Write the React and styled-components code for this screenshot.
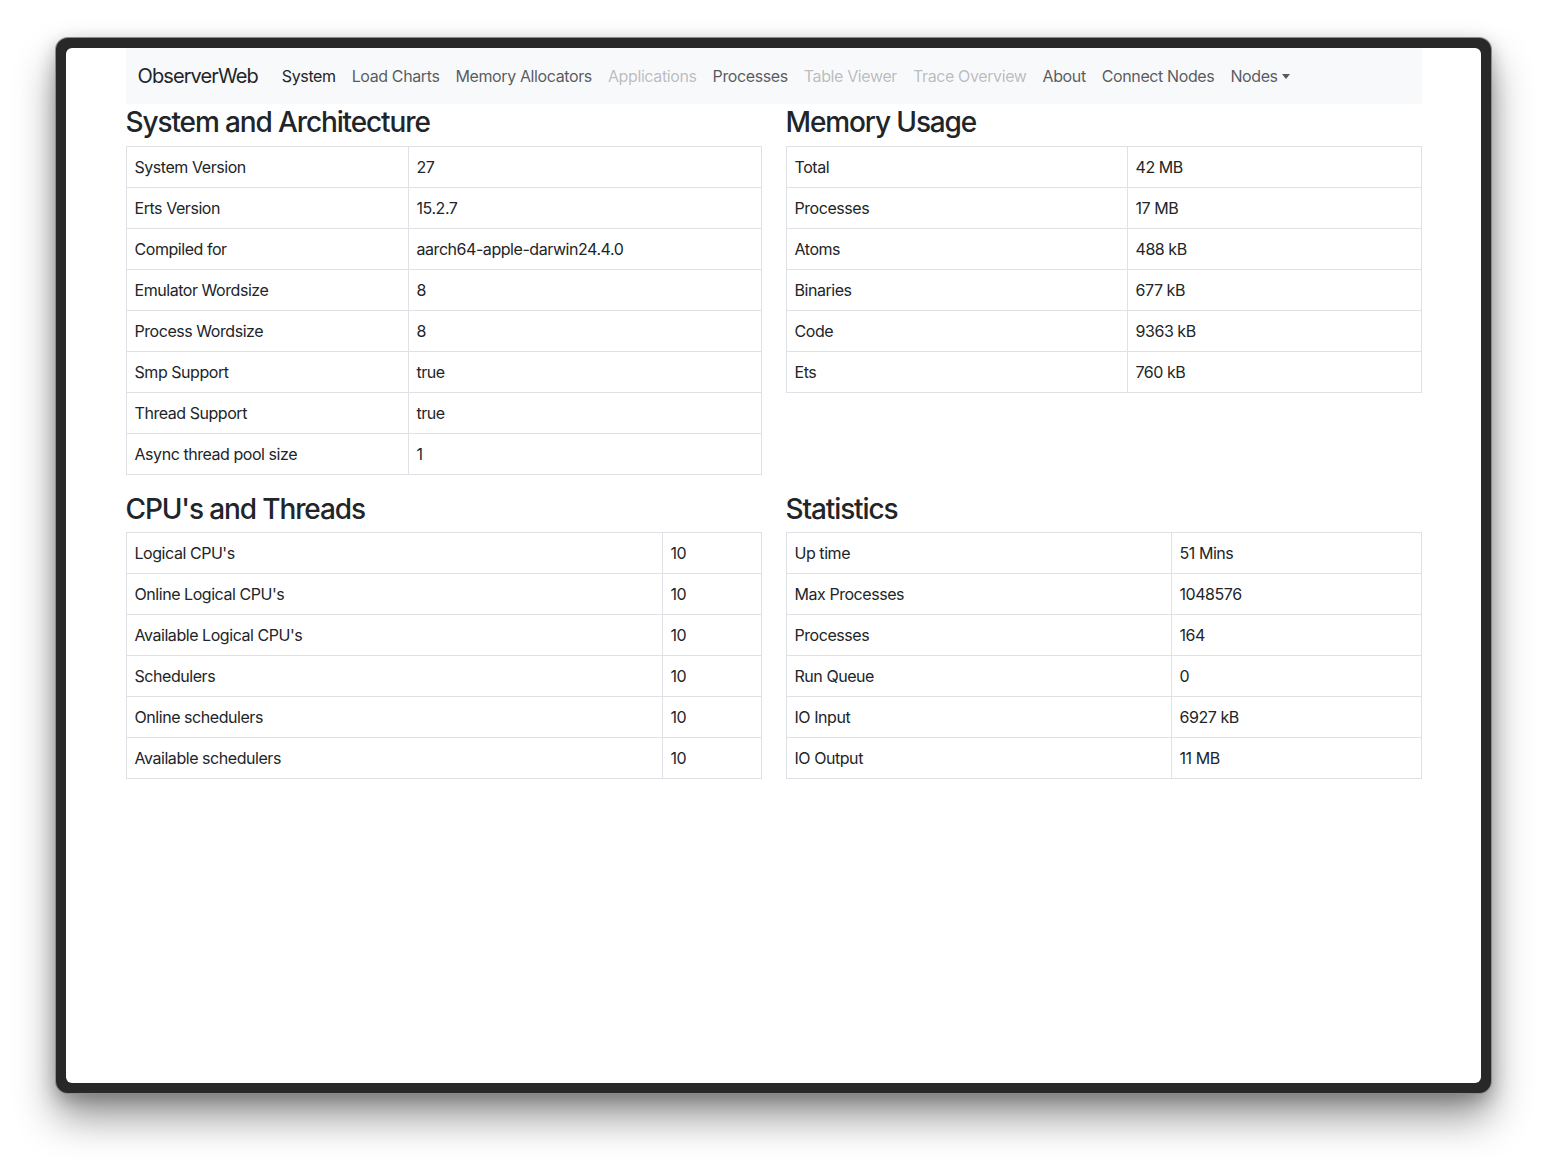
import React from "react";
import styled, { createGlobalStyle } from "styled-components";

const GlobalStyle = createGlobalStyle`
  *, *::before, *::after { box-sizing: border-box; }
  html, body { margin: 0; padding: 0; background: #ffffff; }
  body {
    font-family: Inter, "Noto Sans", "Liberation Sans", sans-serif;
    font-size: 16px;
    line-height: 1.5;
    color: #212529;
    letter-spacing: -0.028em;
  }
`;

const Stage = styled.div`
  width: 1547px;
  height: 1167px;
  padding: 38px 0 0 56px;
  background: #ffffff;
  overflow: hidden;
`;

const Window = styled.div`
  width: 1435px;
  height: 1055px;
  border: 10px solid #282828;
  border-radius: 12px;
  background: #282828;
  box-shadow:
    0 0 0 1px #8c8c8c,
    0 24px 40px rgba(0, 0, 0, 0.42),
    0 6px 18px rgba(0, 0, 0, 0.25);
`;

const Screen = styled.div`
  width: 100%;
  height: 100%;
  background: #ffffff;
  border-radius: 6px;
  overflow: hidden;
`;

const Container = styled.div`
  max-width: 1320px;
  margin: 0 auto;
  padding: 0 12px;
`;

const Navbar = styled.nav`
  display: flex;
  align-items: center;
  padding: 8px 12px;
  background: #f8f9fa;
`;

const Brand = styled.span`
  font-size: 20px;
  line-height: 30px;
  padding: 5px 0;
  margin-right: 16px;
  color: #212529;
  white-space: nowrap;
  letter-spacing: -0.045em;
`;

const NavList = styled.ul`
  display: flex;
  list-style: none;
  margin: 0;
  padding: 0;
`;

const NavLink = styled.li`
  padding: 8px;
  font-size: 16px;
  line-height: 24px;
  white-space: nowrap;
  letter-spacing: -0.024em;
  color: ${(p) =>
    p.$state === "active"
      ? "rgba(33, 37, 41, 1)"
      : p.$state === "disabled"
      ? "rgba(33, 37, 41, 0.3)"
      : "rgba(33, 37, 41, 0.75)"};
`;

const Caret = styled.span`
  display: inline-block;
  margin-left: 4px;
  vertical-align: 3px;
  border-top: 5px solid currentColor;
  border-left: 4.5px solid transparent;
  border-right: 4.5px solid transparent;
`;

const Grid = styled.div`
  display: grid;
  grid-template-columns: 1fr 1fr;
  column-gap: 24px;
`;

const Section = styled.section``;

const Heading = styled.h3`
  margin: 2px 0 6px;
  font-size: 28px;
  font-weight: 500;
  line-height: 1.2;
  color: #212529;
  letter-spacing: -0.04em;
`;

const Table = styled.table`
  width: 100%;
  border-collapse: collapse;
  table-layout: fixed;
  margin-bottom: 16px;
`;

const KeyCol = styled.col`
  width: ${(p) => p.$w}px;
`;

const Cell = styled.td`
  padding: 8px;
  border: 1px solid #dee2e6;
  font-size: 16px;
  line-height: 24px;
  color: #212529;
  white-space: nowrap;
`;

const navItems = [
  ["System", "active"],
  ["Load Charts", "normal"],
  ["Memory Allocators", "normal"],
  ["Applications", "disabled"],
  ["Processes", "normal"],
  ["Table Viewer", "disabled"],
  ["Trace Overview", "disabled"],
  ["About", "normal"],
  ["Connect Nodes", "normal"],
];

const sections = [
  {
    title: "System and Architecture",
    keyWidth: 282,
    rows: [
      ["System Version", "27"],
      ["Erts Version", "15.2.7"],
      ["Compiled for", "aarch64-apple-darwin24.4.0"],
      ["Emulator Wordsize", "8"],
      ["Process Wordsize", "8"],
      ["Smp Support", "true"],
      ["Thread Support", "true"],
      ["Async thread pool size", "1"],
    ],
  },
  {
    title: "Memory Usage",
    keyWidth: 341,
    rows: [
      ["Total", "42 MB"],
      ["Processes", "17 MB"],
      ["Atoms", "488 kB"],
      ["Binaries", "677 kB"],
      ["Code", "9363 kB"],
      ["Ets", "760 kB"],
    ],
  },
  {
    title: "CPU's and Threads",
    keyWidth: 536,
    rows: [
      ["Logical CPU's", "10"],
      ["Online Logical CPU's", "10"],
      ["Available Logical CPU's", "10"],
      ["Schedulers", "10"],
      ["Online schedulers", "10"],
      ["Available schedulers", "10"],
    ],
  },
  {
    title: "Statistics",
    keyWidth: 385,
    rows: [
      ["Up time", "51 Mins"],
      ["Max Processes", "1048576"],
      ["Processes", "164"],
      ["Run Queue", "0"],
      ["IO Input", "6927 kB"],
      ["IO Output", "11 MB"],
    ],
  },
];

export default function App() {
  return (
    <>
      <GlobalStyle />
      <Stage>
        <Window>
          <Screen>
            <Container>
              <Navbar>
                <Brand>ObserverWeb</Brand>
                <NavList>
                  {navItems.map(([label, state]) => (
                    <NavLink key={label} $state={state}>
                      {label}
                    </NavLink>
                  ))}
                  <NavLink $state="normal">
                    Nodes
                    <Caret />
                  </NavLink>
                </NavList>
              </Navbar>
              <Grid>
                {sections.map((s) => (
                  <Section key={s.title}>
                    <Heading>{s.title}</Heading>
                    <Table>
                      <colgroup>
                        <KeyCol $w={s.keyWidth} />
                        <col />
                      </colgroup>
                      <tbody>
                        {s.rows.map(([k, v]) => (
                          <tr key={k}>
                            <Cell>{k}</Cell>
                            <Cell>{v}</Cell>
                          </tr>
                        ))}
                      </tbody>
                    </Table>
                  </Section>
                ))}
              </Grid>
            </Container>
          </Screen>
        </Window>
      </Stage>
    </>
  );
}
